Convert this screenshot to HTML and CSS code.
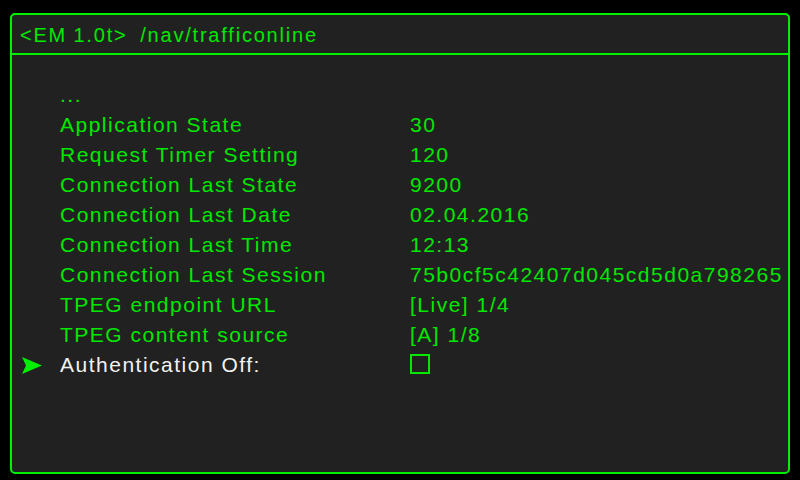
FILE: index.html
```html
<!DOCTYPE html>
<html>
<head>
<meta charset="utf-8">
<link rel="stylesheet" href="styles.css">
</head>
<body>
<div class="screen">
  <div class="panel">
    <div class="header">&lt;EM 1.0t&gt;&nbsp; /nav/trafficonline</div>
    <div class="list">
      <div class="row"><span class="mark"></span><span class="label">...</span><span class="value"></span></div>
      <div class="row"><span class="mark"></span><span class="label">Application State</span><span class="value">30</span></div>
      <div class="row"><span class="mark"></span><span class="label">Request Timer Setting</span><span class="value">120</span></div>
      <div class="row"><span class="mark"></span><span class="label">Connection Last State</span><span class="value">9200</span></div>
      <div class="row"><span class="mark"></span><span class="label">Connection Last Date</span><span class="value">02.04.2016</span></div>
      <div class="row"><span class="mark"></span><span class="label">Connection Last Time</span><span class="value">12:13</span></div>
      <div class="row"><span class="mark"></span><span class="label">Connection Last Session</span><span class="value">75b0cf5c42407d045cd5d0a798265</span></div>
      <div class="row"><span class="mark"></span><span class="label">TPEG endpoint URL</span><span class="value">[Live] 1/4</span></div>
      <div class="row"><span class="mark"></span><span class="label">TPEG content source</span><span class="value">[A] 1/8</span></div>
      <div class="row selected">
        <span class="mark"><svg width="20" height="18" viewBox="0 0 20 18"><polygon points="0,0 20,8.5 0,17 4,8.5" fill="#00ee00"/></svg></span>
        <span class="label">Authentication Off:</span>
        <span class="value"><span class="checkbox"></span></span>
      </div>
    </div>
  </div>
</div>
</body>
</html>
```
FILE: styles.css
```css
html, body {
  margin: 0;
  padding: 0;
  background: #000;
}
.screen {
  width: 800px;
  height: 480px;
  padding: 13px 10px 0 10px;
  box-sizing: border-box;
  background: #000;
}
.panel {
  width: 780px;
  height: 461px;
  box-sizing: border-box;
  border: 2px solid #00f000;
  border-radius: 5px;
  background: #212121;
  overflow: hidden;
  font-family: "Liberation Sans", Arial, sans-serif;
  color: #00e800;
}
.header {
  height: 40px;
  box-sizing: border-box;
  padding: 1px 0 0 8px;
  line-height: 38px;
  font-size: 20px;
  letter-spacing: 1.8px;
  word-spacing: -1px;
  border-bottom: 2px solid #00f000;
}
.list {
  padding-top: 25px;
}
.row {
  display: grid;
  grid-template-columns: 48px 350px 1fr;
  height: 30px;
  line-height: 30px;
  font-size: 21px;
  letter-spacing: 1.5px;
  white-space: nowrap;
}
.mark {
  display: flex;
  align-items: center;
  padding-left: 10px;
}
.mark svg {
  display: block;
  margin-top: 1px;
}
.value {
  display: flex;
  align-items: center;
}
.selected .label {
  color: #f2f2f2;
}
.checkbox {
  display: block;
  width: 20px;
  height: 20px;
  box-sizing: border-box;
  border: 2px solid #00e800;
  margin-top: -2px;
}
```
